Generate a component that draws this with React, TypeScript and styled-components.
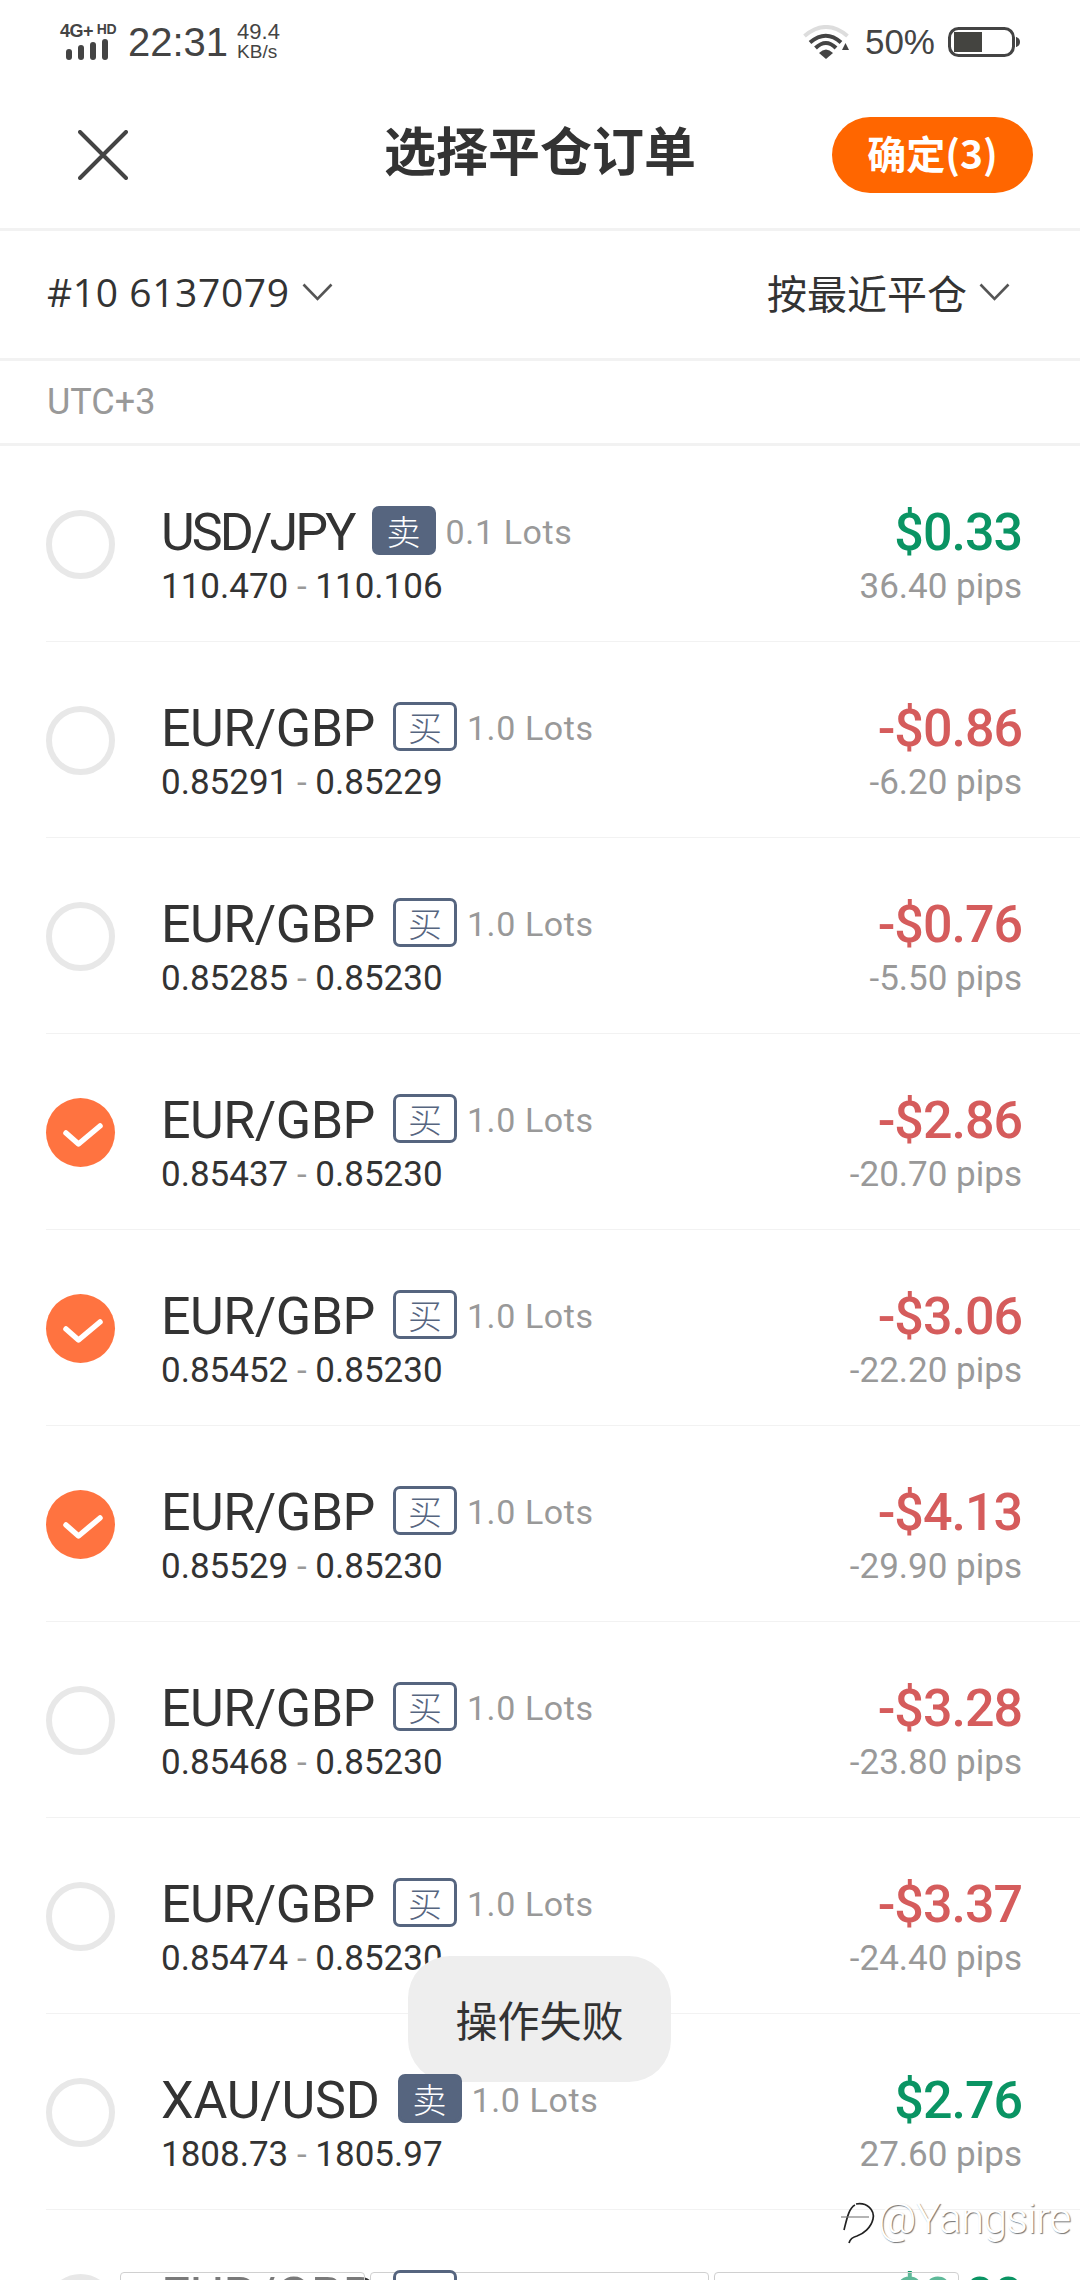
import React from "react";
import styled, { createGlobalStyle } from "styled-components";

const GlobalStyle = createGlobalStyle`
  html, body {
    margin: 0;
    padding: 0;
    background: #fff;
  }
  * {
    box-sizing: border-box;
  }
`;

const CJK = `"Noto Sans CJK SC", sans-serif`;
const DIN = `Roboto, "Noto Sans CJK SC", sans-serif`;
const SYS = `"Liberation Sans", sans-serif`;

const Page = styled.div`
  position: relative;
  width: 1080px;
  height: 2280px;
  overflow: hidden;
  background: #fff;
  color: #333;
`;

const StatusBar = styled.div`
  display: flex;
  align-items: center;
  justify-content: space-between;
  height: 75px;
  padding: 8px 60px 0 60px;
  font-family: ${SYS};
  color: #444;
`;

const StatusGroup = styled.div`
  display: flex;
  align-items: center;
`;

const NetBlock = styled.div`
  display: flex;
  flex-direction: column;
  width: 56px;
  margin-right: 12px;
`;

const NetLabel = styled.div`
  display: flex;
  justify-content: space-between;
  align-items: flex-start;
  font-size: 18px;
  line-height: 16px;
  font-weight: 700;
  letter-spacing: -0.5px;
  white-space: nowrap;
`;

const NetHd = styled.span`
  font-size: 14px;
  line-height: 13px;
`;

const Time = styled.span`
  font-size: 40px;
  line-height: 44px;
  margin-right: 9px;
`;

const Speed = styled.div`
  display: flex;
  flex-direction: column;
  font-size: 22px;
  line-height: 20px;
`;

const SmallUnit = styled.span`
  font-size: 19px;
`;

const BatteryText = styled.span`
  font-size: 35px;
  margin: 0 13px 0 16px;
`;

const Header = styled.div`
  display: grid;
  grid-template-columns: 1fr auto 1fr;
  align-items: center;
  height: 156px;
  padding: 6px 47px 0 47px;
  border-bottom: 3px solid #f2f2f2;
`;

const CloseButton = styled.div`
  display: flex;
  margin-left: 31px;
`;

const Title = styled.h1`
  margin: 0 0 12px 0;
  font-family: ${CJK};
  font-size: 52px;
  line-height: 60px;
  font-weight: 700;
  color: #333;
`;

const ConfirmButton = styled.button`
  justify-self: end;
  width: 201px;
  height: 76px;
  border: 0;
  border-radius: 38px;
  background: #ff6600;
  color: #fff;
  font-family: ${CJK};
  font-size: 39px;
  font-weight: 700;
  padding: 0 0 6px 0;
`;

const FilterBar = styled.div`
  display: flex;
  align-items: center;
  justify-content: space-between;
  height: 130px;
  padding: 0 70px 5px 47px;
  border-bottom: 3px solid #f2f2f2;
`;

const FilterItem = styled.div`
  display: flex;
  align-items: center;
  gap: 12px;
  font-family: ${CJK};
  font-size: 40px;
  line-height: 50px;
  color: #333;
`;

const AccountText = styled.span`
  font-family: "Open Sans", sans-serif;
  font-size: 39px;
  letter-spacing: 0.6px;
`;

const ZoneBar = styled.div`
  display: flex;
  align-items: center;
  height: 85px;
  padding-left: 47px;
  border-bottom: 3px solid #f2f2f2;
  font-family: ${DIN};
  font-size: 36px;
  color: #999;
`;

const Row = styled.div`
  display: flex;
  align-items: flex-start;
  height: 196px;
  margin-left: 46px;
  padding: 61px 58px 0 0;
  border-bottom: 1px solid #f2f2f2;
`;

const Radio = styled.div<{ $checked: boolean }>`
  display: flex;
  flex: none;
  width: 69px;
  height: 69px;
  margin: 3px 46px 0 0;
  border-radius: 50%;
  border: ${(p) => (p.$checked ? "0" : "6px solid #e8e8e8")};
  background: ${(p) => (p.$checked ? "#ff7340" : "#fff")};
`;

const Info = styled.div`
  display: flex;
  flex-direction: column;
  gap: 10px;
  flex: 1;
`;

const TopLine = styled.div`
  display: flex;
  align-items: center;
  height: 50px;
`;

const Symbol = styled.span<{ $tracking: number }>`
  font-family: ${DIN};
  font-size: 52px;
  font-weight: 400;
  letter-spacing: ${(p) => p.$tracking}px;
  color: #333;
`;

const SideBadge = styled.span<{ $sell: boolean }>`
  position: relative;
  z-index: 1;
  display: flex;
  align-items: center;
  justify-content: center;
  width: 64px;
  height: 49px;
  margin: -3px 10px 0 18px;
  border-radius: 7px;
  border: 3px solid #56657f;
  background: ${(p) => (p.$sell ? "#56657f" : "#fff")};
  color: ${(p) => (p.$sell ? "#fff" : "#56657f")};
  font-family: ${CJK};
  font-size: 34px;
  font-weight: 300;
`;

const Lots = styled.span`
  font-family: ${DIN};
  font-size: 34px;
  letter-spacing: 0.6px;
  color: #999;
`;

const PriceLine = styled.div`
  font-family: ${DIN};
  font-size: 35px;
  line-height: 40px;
  color: #333;
`;

const Dash = styled.span`
  color: #999;
`;

const Amount = styled.div`
  display: flex;
  flex-direction: column;
  align-items: flex-end;
  gap: 9px;
  padding-top: 1px;
`;

const Profit = styled.span<{ $gain: boolean }>`
  font-family: ${DIN};
  font-size: 52px;
  line-height: 50px;
  font-weight: 500;
  letter-spacing: -1px;
  color: ${(p) => (p.$gain ? "#0a9463" : "#d55c5c")};
`;

const Pips = styled.span`
  font-family: ${DIN};
  font-size: 35px;
  line-height: 40px;
  color: #999;
`;

const Toast = styled.div`
  position: absolute;
  left: 408px;
  top: 1956px;
  display: flex;
  align-items: center;
  justify-content: center;
  width: 263px;
  height: 126px;
  padding-bottom: 2px;
  border-radius: 42px;
  background: #eeeeee;
  font-family: ${CJK};
  font-size: 42px;
  color: #333;
`;

const Watermark = styled.div`
  position: absolute;
  left: 838px;
  top: 2194px;
  display: flex;
  align-items: flex-start;
  gap: 2px;
  font-family: Roboto, sans-serif;
  font-weight: 300;
  font-size: 42px;
  line-height: 50px;
  letter-spacing: -0.5px;
  color: #fff;
  text-shadow: 1px 1px 1px rgba(0, 0, 0, 0.55);
`;

const GhostBoxes = styled.div`
  position: absolute;
  z-index: 0;
  left: 120px;
  top: 2272px;
  display: flex;
  gap: 5px;
`;

const GhostBox = styled.div<{ $w: number }>`
  width: ${(p) => p.$w}px;
  height: 30px;
  border: 1px solid #d0d0d0;
  border-radius: 4px;
  background: rgba(255, 255, 255, 0.35);
`;

type Order = {
  symbol: string;
  sell: boolean;
  lots: string;
  open: string;
  close: string;
  profit: string;
  pips: string;
  checked?: boolean;
};

const orders: Order[] = [
  { symbol: "USD/JPY", sell: true, lots: "0.1", open: "110.470", close: "110.106", profit: "$0.33", pips: "36.40" },
  { symbol: "EUR/GBP", sell: false, lots: "1.0", open: "0.85291", close: "0.85229", profit: "-$0.86", pips: "-6.20" },
  { symbol: "EUR/GBP", sell: false, lots: "1.0", open: "0.85285", close: "0.85230", profit: "-$0.76", pips: "-5.50" },
  { symbol: "EUR/GBP", sell: false, lots: "1.0", open: "0.85437", close: "0.85230", profit: "-$2.86", pips: "-20.70", checked: true },
  { symbol: "EUR/GBP", sell: false, lots: "1.0", open: "0.85452", close: "0.85230", profit: "-$3.06", pips: "-22.20", checked: true },
  { symbol: "EUR/GBP", sell: false, lots: "1.0", open: "0.85529", close: "0.85230", profit: "-$4.13", pips: "-29.90", checked: true },
  { symbol: "EUR/GBP", sell: false, lots: "1.0", open: "0.85468", close: "0.85230", profit: "-$3.28", pips: "-23.80" },
  { symbol: "EUR/GBP", sell: false, lots: "1.0", open: "0.85474", close: "0.85230", profit: "-$3.37", pips: "-24.40" },
  { symbol: "XAU/USD", sell: true, lots: "1.0", open: "1808.73", close: "1805.97", profit: "$2.76", pips: "27.60" },
  { symbol: "EUR/GBP", sell: false, lots: "1.0", open: "0.85474", close: "0.85230", profit: "$0.00", pips: "0.00" },
];

const Chevron = () => (
  <svg width="31" height="18" viewBox="0 0 31 18" fill="none">
    <path d="M1.5 1.5 L15.5 16 L29.5 1.5" stroke="#555" strokeWidth="2.6" />
  </svg>
);

const SignalBars = () => (
  <svg width="46" height="21" viewBox="0 0 46 21" style={{ marginLeft: 6 }}>
    <g fill="#444">
      <rect x="0" y="10" width="6" height="11" rx="3" />
      <rect x="12" y="6" width="6" height="15" rx="3" />
      <rect x="24" y="3" width="6" height="18" rx="3" />
      <rect x="36" y="0" width="6" height="21" rx="3" />
    </g>
  </svg>
);

const WifiIcon = () => (
  <svg width="46" height="34" viewBox="0 0 46 34" fill="none">
    <path d="M1.5 11 Q23 -7 44.5 11" stroke="#ddd" strokeWidth="4" />
    <path d="M7 17.5 Q23 4 38 17.5" stroke="#444" strokeWidth="4" />
    <path d="M12.5 23 Q23 13 33 23" stroke="#444" strokeWidth="4" />
    <path d="M16 28 Q23 21 30 28 L23 34 Z" fill="#444" />
    <path d="M39 25 L46 25 L42.5 18 Z" fill="#444" />
  </svg>
);

const BatteryIcon = () => (
  <svg width="72" height="30" viewBox="0 0 72 30" fill="none">
    <rect x="1.5" y="1.5" width="64" height="27" rx="9" stroke="#444" strokeWidth="3" />
    <path d="M6 5 H34 V25 H6 Z" fill="#444440" />
    <path d="M68 10 Q72 11 72 15 Q72 19 68 20 Z" fill="#444" />
  </svg>
);

const CloseIcon = () => (
  <svg width="50" height="50" viewBox="0 0 50 50" fill="none">
    <path d="M2 2 L48 48 M48 2 L2 48" stroke="#444" strokeWidth="4" strokeLinecap="round" />
  </svg>
);

const CheckIcon = () => (
  <svg width="69" height="69" viewBox="0 0 69 69" fill="none">
    <path d="M20 35 L32.5 46 L54 28" stroke="#fff" strokeWidth="5.5" strokeLinecap="round" strokeLinejoin="round" />
  </svg>
);

const WeiboLogo = () => (
  <svg width="38" height="50" viewBox="0 0 38 50" fill="none">
    <path d="M18 10 C29 8 37 16 35 25 C33 34 25 40 19 42 C15 43 12 45 11 49" stroke="#222" strokeWidth="1.7" />
    <path d="M17 11 C11 14 9 24 6 36" stroke="#222" strokeWidth="1.7" />
    <path d="M3 23 H31" stroke="#777" strokeWidth="1.1" />
  </svg>
);

const symbolTracking = (symbol: string) => {
  if (symbol === "USD/JPY") return -2.9;
  if (symbol === "XAU/USD") return -0.2;
  return -0.5;
};

const OrderRow = ({ order }: { order: Order }) => (
  <Row>
    <Radio $checked={!!order.checked}>{order.checked && <CheckIcon />}</Radio>
    <Info>
      <TopLine>
        <Symbol $tracking={symbolTracking(order.symbol)}>{order.symbol}</Symbol>
        <SideBadge $sell={order.sell}>{order.sell ? "卖" : "买"}</SideBadge>
        <Lots>{order.lots} Lots</Lots>
      </TopLine>
      <PriceLine>
        {order.open} <Dash>-</Dash> {order.close}
      </PriceLine>
    </Info>
    <Amount>
      <Profit $gain={!order.profit.startsWith("-")}>{order.profit}</Profit>
      <Pips>{order.pips} pips</Pips>
    </Amount>
  </Row>
);

export default function App() {
  return (
    <Page>
      <GlobalStyle />
      <StatusBar>
        <StatusGroup>
          <NetBlock>
            <NetLabel>
              <span>4G+</span>
              <NetHd>HD</NetHd>
            </NetLabel>
            <SignalBars />
          </NetBlock>
          <Time>22:31</Time>
          <Speed>
            <span>49.4</span>
            <SmallUnit>KB/s</SmallUnit>
          </Speed>
        </StatusGroup>
        <StatusGroup>
          <WifiIcon />
          <BatteryText>50%</BatteryText>
          <BatteryIcon />
        </StatusGroup>
      </StatusBar>
      <Header>
        <CloseButton>
          <CloseIcon />
        </CloseButton>
        <Title>选择平仓订单</Title>
        <ConfirmButton>确定(3)</ConfirmButton>
      </Header>
      <FilterBar>
        <FilterItem>
          <AccountText>#10 6137079</AccountText>
          <Chevron />
        </FilterItem>
        <FilterItem>
          按最近平仓
          <Chevron />
        </FilterItem>
      </FilterBar>
      <ZoneBar>UTC+3</ZoneBar>
      {orders.map((order, i) => (
        <OrderRow key={i} order={order} />
      ))}
      <GhostBoxes>
        <GhostBox $w={245} />
        <GhostBox $w={339} />
        <GhostBox $w={245} />
      </GhostBoxes>
      <Toast>操作失败</Toast>
      <Watermark>
        <WeiboLogo />
        <span>@Yangsire</span>
      </Watermark>
    </Page>
  );
}
